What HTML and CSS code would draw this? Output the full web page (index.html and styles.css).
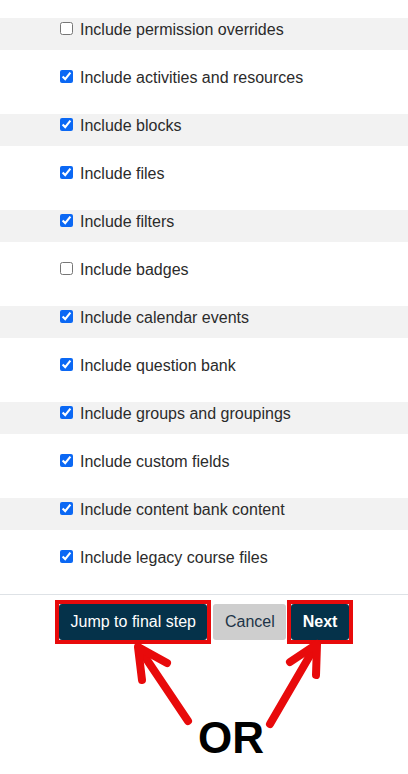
FILE: index.html
```html
<!DOCTYPE html>
<html lang="en">
<head>
<meta charset="utf-8">
<title>Backup settings</title>
<link rel="stylesheet" href="styles.css">
</head>
<body>
<div class="options">
  <label class="row shaded"><input type="checkbox"><span>Include permission overrides</span></label>
  <label class="row"><input type="checkbox" checked><span>Include activities and resources</span></label>
  <label class="row shaded"><input type="checkbox" checked><span>Include blocks</span></label>
  <label class="row"><input type="checkbox" checked><span>Include files</span></label>
  <label class="row shaded"><input type="checkbox" checked><span>Include filters</span></label>
  <label class="row"><input type="checkbox"><span>Include badges</span></label>
  <label class="row shaded"><input type="checkbox" checked><span>Include calendar events</span></label>
  <label class="row"><input type="checkbox" checked><span>Include question bank</span></label>
  <label class="row shaded"><input type="checkbox" checked><span>Include groups and groupings</span></label>
  <label class="row"><input type="checkbox" checked><span>Include custom fields</span></label>
  <label class="row shaded"><input type="checkbox" checked><span>Include content bank content</span></label>
  <label class="row"><input type="checkbox" checked><span>Include legacy course files</span></label>
</div>
<div class="actions">
  <span class="highlight"><button class="btn btn-primary" type="button">Jump to final step</button></span>
  <button class="btn btn-secondary cancel" type="button">Cancel</button>
  <span class="highlight"><button class="btn btn-primary next" type="button">Next</button></span>
</div>
<div class="annotations">
  <svg class="arrows" width="408" height="774" viewBox="0 0 408 774" aria-hidden="true">
    <g fill="none" stroke="#e80a0b" stroke-width="8" stroke-linecap="round" stroke-linejoin="round">
      <path d="M188 721 L139 648"/>
      <path d="M142 680 L138 647 L167 663"/>
      <path d="M270 724 L316 645"/>
      <path d="M290 662 L317 644 L316 675"/>
    </g>
  </svg>
  <div class="or">OR</div>
</div>
</body>
</html>
```

FILE: styles.css
```css
html, body {
  margin: 0;
  padding: 0;
  background: #ffffff;
}

body {
  position: relative;
  width: 408px;
  height: 774px;
  overflow: hidden;
  font-family: "Liberation Sans", Arial, sans-serif;
  font-size: 16px;
  color: #2b2b2b;
}

.options {
  padding-top: 18px;
}

.row {
  display: flex;
  align-items: flex-start;
  box-sizing: border-box;
  height: 32px;
  margin-bottom: 16px;
  padding: 2px 0 0 60px;
  line-height: 19px;
}

.row.shaded {
  background: #f2f2f2;
}

.row input {
  width: 13px;
  height: 13px;
  margin: 2px 7px 0 0;
  accent-color: #0b68f4;
}

.actions {
  display: flex;
  justify-content: center;
  align-items: center;
  border-top: 1px solid #dee2e6;
  padding-top: 5px;
}

.highlight {
  display: inline-flex;
  border: 4px solid #e80a0b;
  background: #ffffff;
}

.btn {
  height: 36px;
  padding: 0 11.5px;
  border: 0;
  border-radius: 3px;
  font-family: "Liberation Sans", Arial, sans-serif;
  font-size: 16px;
  line-height: 36px;
  cursor: pointer;
}

.btn-primary {
  background: #05324a;
  color: #ffffff;
}

.btn-secondary {
  background: #cecece;
  color: #1d3447;
}

.cancel {
  margin: 0 1px 0 2px;
}

.next {
  font-weight: 700;
}

.annotations {
  position: absolute;
  left: 0;
  top: 0;
  width: 408px;
  height: 774px;
  pointer-events: none;
}

.arrows {
  position: absolute;
  left: 0;
  top: 0;
}

.or {
  position: absolute;
  left: 198px;
  top: 716px;
  font-size: 44px;
  font-weight: 700;
  line-height: 44px;
  color: #000000;
}
```
